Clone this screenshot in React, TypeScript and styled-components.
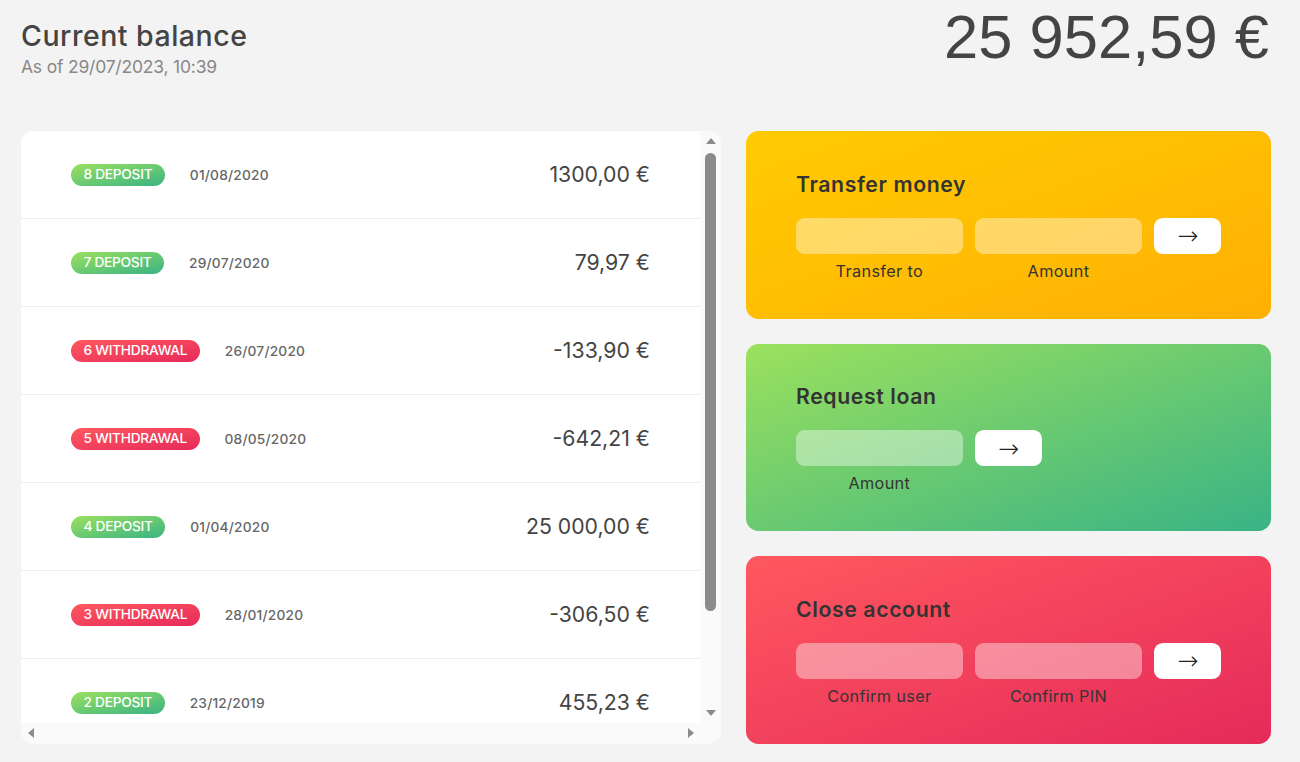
import React from "react";
import styled, { createGlobalStyle, css } from "styled-components";

const GlobalStyle = createGlobalStyle`
  * { margin: 0; padding: 0; box-sizing: border-box; }
  html, body { background: #f3f3f3; }
  body {
    font-family: Inter, "Noto Sans", sans-serif;
    color: #444;
    width: 1300px;
    height: 762px;
    overflow: hidden;
  }
`;

const green = css`background-image: linear-gradient(to top left, #39b385, #9be15d);`;
const red = css`background-image: linear-gradient(to top left, #e52a5a, #ff585f);`;
const yellow = css`background-image: linear-gradient(to top left, #ffb003, #ffcb03);`;

const Layout = styled.main`
  margin-left: 21px;
  width: 1250px;
  display: grid;
  grid-template-columns: 4fr 3fr;
  grid-template-rows: auto repeat(3, 187.5px);
  gap: 25px;
`;

const Balance = styled.section`
  grid-column: 1 / span 2;
  display: flex;
  align-items: flex-start;
  justify-content: space-between;
  padding-top: 15px;
  margin-bottom: 26px;
`;

const BalanceLabel = styled.p`
  font-size: 28.5px;
  letter-spacing: 0.5px;
  font-weight: 500;
  line-height: 41px;
  margin-bottom: -2px;
  color: #444;
`;

const BalanceDate = styled.p`
  font-size: 17.5px;
  letter-spacing: -0.2px;
  line-height: 26px;
  color: #888;
`;

const BalanceValue = styled.p`
  font-family: "Liberation Sans", Arial, sans-serif;
  font-size: 61.5px;
  line-height: 60px;
  margin-top: -8px;
  margin-right: 2px;
  color: #444;
`;

/* movements panel: list + scrollbars laid out as a 2x2 grid */
const Movements = styled.section`
  grid-row: 2 / span 3;
  background: #fafafa;
  border-radius: 12.5px;
  overflow: hidden;
  display: grid;
  grid-template-columns: 1fr 21px;
  grid-template-rows: 1fr 21px;
`;

const List = styled.div`
  background: #fff;
  overflow: hidden;
  min-height: 0;
`;

const VBar = styled.div`
  display: flex;
  flex-direction: column;
  align-items: center;
  padding: 0 5px;
`;

const HBar = styled.div`
  display: flex;
  justify-content: space-between;
  align-items: center;
`;

const ArrowCell = styled.div`
  width: 19px;
  height: 19px;
  flex: none;
  display: flex;
  align-items: center;
  justify-content: center;
`;

const Tri = styled.span<{ $dir: "up" | "down" | "left" | "right" }>`
  width: 0;
  height: 0;
  ${(p) =>
    p.$dir === "up"
      ? "border-left: 5.5px solid transparent; border-right: 5.5px solid transparent; border-bottom: 6px solid #8b8b8b;"
      : p.$dir === "down"
      ? "border-left: 5.5px solid transparent; border-right: 5.5px solid transparent; border-top: 6px solid #8b8b8b;"
      : p.$dir === "left"
      ? "border-top: 5px solid transparent; border-bottom: 5px solid transparent; border-right: 6px solid #8b8b8b;"
      : "border-top: 5px solid transparent; border-bottom: 5px solid transparent; border-left: 6px solid #8b8b8b;"}
`;

const Thumb = styled.div`
  width: 11px;
  height: 458px;
  margin-top: 3px;
  border-radius: 6px;
  background: #8b8b8b;
`;

const Spacer = styled.div`
  flex: 1;
`;

const Row = styled.div`
  padding: 28px 50px;
  display: flex;
  align-items: center;
  border-bottom: 1px solid #eee;
`;

const TypeBadge = styled.span<{ $kind: "deposit" | "withdrawal" }>`
  font-size: 13.75px;
  letter-spacing: -0.3px;
  line-height: 19.5px;
  text-transform: uppercase;
  font-weight: 500;
  color: #fff;
  padding: 1.25px 12.5px;
  border-radius: 125px;
  margin-right: 25px;
  ${(p) => (p.$kind === "deposit" ? green : red)}
`;

const MoveDate = styled.span`
  font-size: 13.75px;
  letter-spacing: 0.2px;
  text-transform: uppercase;
  font-weight: 500;
  color: #666;
`;

const MoveValue = styled.span`
  font-size: 21.25px;
  line-height: 31px;
  margin-left: auto;
  color: #444;
`;

const Card = styled.section<{ $tone: "yellow" | "green" | "red" }>`
  border-radius: 12.5px;
  padding: 37.5px 50px;
  color: #333;
  ${(p) => (p.$tone === "yellow" ? yellow : p.$tone === "green" ? green : red)}
`;

const CardTitle = styled.h2`
  font-size: 21.25px;
  letter-spacing: 0.6px;
  line-height: 30px;
  font-weight: 600;
  color: #333;
  margin-bottom: 19px;
`;

const Form = styled.form<{ $cols: string }>`
  display: grid;
  grid-template-columns: ${(p) => p.$cols};
  gap: 5px 12.5px;
`;

const Input = styled.input`
  width: 100%;
  height: 36px;
  border: none;
  background-color: rgba(255, 255, 255, 0.4);
  font-family: inherit;
  font-size: 18.75px;
  text-align: center;
  color: #333;
  padding: 4px 12.5px;
  border-radius: 8.75px;
  outline: none;
`;

const Button = styled.button`
  border: none;
  border-radius: 8.75px;
  font-family: "DejaVu Sans", sans-serif;
  font-weight: 200;
  font-size: 25px;
  line-height: 1;
  background-color: #fff;
  color: #222;
  height: 36px;
  cursor: pointer;
`;

const Label = styled.label<{ $col?: number }>`
  font-size: 16.25px;
  letter-spacing: 0.35px;
  line-height: 24px;
  text-align: center;
  color: #333;
  grid-row: 2;
  ${(p) => (p.$col ? `grid-column: ${p.$col};` : "")}
`;

type Move = { n: number; date: string; value: string; kind: "deposit" | "withdrawal" };

const moves: Move[] = [
  { n: 8, date: "01/08/2020", value: "1300,00 €", kind: "deposit" },
  { n: 7, date: "29/07/2020", value: "79,97 €", kind: "deposit" },
  { n: 6, date: "26/07/2020", value: "-133,90 €", kind: "withdrawal" },
  { n: 5, date: "08/05/2020", value: "-642,21 €", kind: "withdrawal" },
  { n: 4, date: "01/04/2020", value: "25 000,00 €", kind: "deposit" },
  { n: 3, date: "28/01/2020", value: "-306,50 €", kind: "withdrawal" },
  { n: 2, date: "23/12/2019", value: "455,23 €", kind: "deposit" },
];

export default function App() {
  return (
    <>
      <GlobalStyle />
      <Layout>
        <Balance>
          <div>
            <BalanceLabel>Current balance</BalanceLabel>
            <BalanceDate>As of 29/07/2023, 10:39</BalanceDate>
          </div>
          <BalanceValue>25 952,59 €</BalanceValue>
        </Balance>

        <Movements>
          <List>
            {moves.map((m) => (
              <Row key={m.n}>
                <TypeBadge $kind={m.kind}>
                  {m.n} {m.kind}
                </TypeBadge>
                <MoveDate>{m.date}</MoveDate>
                <MoveValue>{m.value}</MoveValue>
              </Row>
            ))}
          </List>
          <VBar>
            <ArrowCell>
              <Tri $dir="up" />
            </ArrowCell>
            <Thumb />
            <Spacer />
            <ArrowCell>
              <Tri $dir="down" />
            </ArrowCell>
          </VBar>
          <HBar>
            <ArrowCell>
              <Tri $dir="left" />
            </ArrowCell>
            <ArrowCell>
              <Tri $dir="right" />
            </ArrowCell>
          </HBar>
          <div />
        </Movements>

        <Card $tone="yellow">
          <CardTitle>Transfer money</CardTitle>
          <Form $cols="2.5fr 2.5fr 1fr" onSubmit={(e) => e.preventDefault()}>
            <Input type="text" />
            <Input type="number" />
            <Button>→</Button>
            <Label>Transfer to</Label>
            <Label>Amount</Label>
          </Form>
        </Card>

        <Card $tone="green">
          <CardTitle>Request loan</CardTitle>
          <Form $cols="2.5fr 1fr 2.5fr" onSubmit={(e) => e.preventDefault()}>
            <Input type="number" />
            <Button>→</Button>
            <Label $col={1}>Amount</Label>
          </Form>
        </Card>

        <Card $tone="red">
          <CardTitle>Close account</CardTitle>
          <Form $cols="2.5fr 2.5fr 1fr" onSubmit={(e) => e.preventDefault()}>
            <Input type="text" />
            <Input type="password" />
            <Button>→</Button>
            <Label>Confirm user</Label>
            <Label>Confirm PIN</Label>
          </Form>
        </Card>
      </Layout>
    </>
  );
}
